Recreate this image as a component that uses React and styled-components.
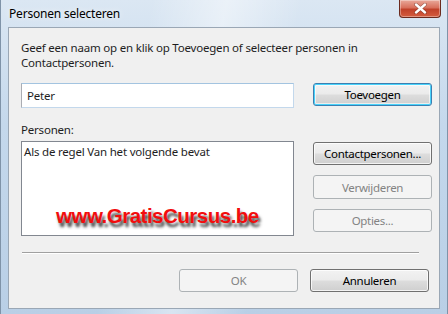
import React from 'react';
import styled, { createGlobalStyle } from 'styled-components';

const GlobalStyle = createGlobalStyle`
  html, body {
    margin: 0;
    padding: 0;
    background: #c6d8ea;
  }
  body {
    font-family: "Noto Sans", "Open Sans", "DejaVu Sans", sans-serif;
    font-size: 11.5px;
    letter-spacing: -0.2px;
    color: #1e1e1e;
  }
`;

const Window = styled.div`
  position: relative;
  width: 448px;
  height: 314px;
  box-sizing: border-box;
  display: flex;
  flex-direction: column;
  padding: 0 7px 5px 7px;
  background:
    linear-gradient(100deg, rgba(255,255,255,0) 30%, rgba(255,255,255,0.45) 45%, rgba(255,255,255,0) 60%),
    linear-gradient(180deg, #dbe7f3 0%, #c4d8ec 40%, #b9cfe6 100%);
  border-left: 1px solid #7f93a8;
  border-right: 1px solid #7f93a8;
  overflow: hidden;
`;

const TitleBar = styled.div`
  height: 27px;
  display: flex;
  align-items: center;
  justify-content: space-between;
  padding-bottom: 1px;
  box-sizing: border-box;
`;

const Title = styled.span`
  font-size: 12px;
  color: #000;
  padding-left: 1px;
  text-shadow: 0 0 6px rgba(255, 255, 255, 0.9);
`;

const CloseButton = styled.div`
  align-self: flex-start;
  width: 40px;
  height: 17px;
  margin-right: -1px;
  border: 1px solid #6b2a1e;
  border-top: none;
  border-radius: 0 0 4px 4px;
  background: linear-gradient(180deg, #e9a99b 0%, #d8705c 45%, #c0412a 55%, #d45d3f 100%);
  display: flex;
  align-items: center;
  justify-content: center;
  box-shadow: inset 0 0 0 1px rgba(255, 255, 255, 0.35);
`;

const Panel = styled.div`
  flex: 1;
  background: #f0f0f0;
  border: 1px solid #9aa7b5;
  padding: 12px 10px 0 12px;
  display: flex;
  flex-direction: column;
`;

const Intro = styled.p`
  margin: 0;
  line-height: 15px;
  width: 400px;
`;

const Grid = styled.div`
  display: grid;
  grid-template-columns: 273px 119px;
  column-gap: 19px;
  margin-top: 13px;
`;

const NameInput = styled.div`
  height: 25px;
  box-sizing: border-box;
  border: 1px solid #abadb3;
  border-top-color: #a3c4e0;
  border-right-color: #c3d8ec;
  border-bottom-color: #c3d8ec;
  background: #fff;
  padding-left: 5px;
  display: flex;
  align-items: center;
`;

const Label = styled.div`
  grid-column: 1 / 3;
  margin-top: 14px;
  height: 19px;
  line-height: 15px;
`;

const ListBox = styled.div`
  height: 95px;
  box-sizing: border-box;
  border: 1px solid #828790;
  background: #fff;
  padding: 2px 2px;
  line-height: 15px;
`;

const ButtonColumn = styled.div`
  display: flex;
  flex-direction: column;
  gap: 10px;
  padding-top: 1px;
`;

const Button = styled.div`
  height: ${(p) => (p.$tall ? 24 : 23)}px;
  box-sizing: border-box;
  border-radius: 3px;
  display: flex;
  align-items: center;
  justify-content: center;
  font-size: 11.5px;
  letter-spacing: -0.3px;
  border: 1px solid ${(p) => (p.$disabled ? '#adb2b5' : p.$default ? '#3c7fb1' : '#707070')};
  color: ${(p) => (p.$disabled ? '#838383' : '#000')};
  background: ${(p) =>
    p.$disabled
      ? '#f4f4f4'
      : 'linear-gradient(180deg, #f2f2f2 0%, #ebebeb 48%, #dddddd 52%, #cfcfcf 100%)'};
  box-shadow: ${(p) =>
    p.$default
      ? 'inset 0 0 0 1px #48d3fb, inset 0 0 0 2px rgba(255,255,255,0.6)'
      : p.$disabled
      ? 'none'
      : 'inset 0 0 0 1px rgba(255,255,255,0.75)'};
`;

const Separator = styled.div`
  height: 1px;
  background: #a0a0a0;
  border-bottom: 1px solid #fff;
  margin: 16px 10px 0 1px;
`;

const Footer = styled.div`
  display: flex;
  justify-content: flex-end;
  gap: 12px;
  margin-top: 15px;
`;

const FooterButton = styled(Button)`
  width: 119px;
`;

const Watermark = styled.div`
  position: absolute;
  left: 55px;
  top: 204px;
  font-family: "Liberation Sans", Arial, sans-serif;
  font-weight: bold;
  font-size: 20.5px;
  letter-spacing: -0.5px;
  color: #f20d0d;
  text-shadow: 2px 4px 3px rgba(30, 30, 30, 0.85);
`;

const App = () => (
  <>
    <GlobalStyle />
    <Window>
      <TitleBar>
        <Title>Personen selecteren</Title>
        <CloseButton>
          <svg width="13" height="11" viewBox="0 0 13 11">
            <path
              d="M2 1.5 L11 9.5 M11 1.5 L2 9.5"
              stroke="#4a1a10"
              strokeWidth="3.6"
              strokeLinecap="round"
              opacity="0.5"
            />
            <path
              d="M2 1.5 L11 9.5 M11 1.5 L2 9.5"
              stroke="#ffffff"
              strokeWidth="2.4"
              strokeLinecap="round"
            />
          </svg>
        </CloseButton>
      </TitleBar>
      <Panel>
        <Intro>
          Geef een naam op en klik op Toevoegen of selecteer personen in Contactpersonen.
        </Intro>
        <Grid>
          <NameInput>Peter</NameInput>
          <Button $default>Toevoegen</Button>
          <Label>Personen:</Label>
          <ListBox>Als de regel Van het volgende bevat</ListBox>
          <ButtonColumn>
            <Button>Contactpersonen...</Button>
            <Button $tall $disabled>Verwijderen</Button>
            <Button $disabled>Opties...</Button>
          </ButtonColumn>
        </Grid>
        <Separator />
        <Footer>
          <FooterButton $disabled>OK</FooterButton>
          <FooterButton>Annuleren</FooterButton>
        </Footer>
      </Panel>
      <Watermark>www.GratisCursus.be</Watermark>
    </Window>
  </>
);

export default App;
